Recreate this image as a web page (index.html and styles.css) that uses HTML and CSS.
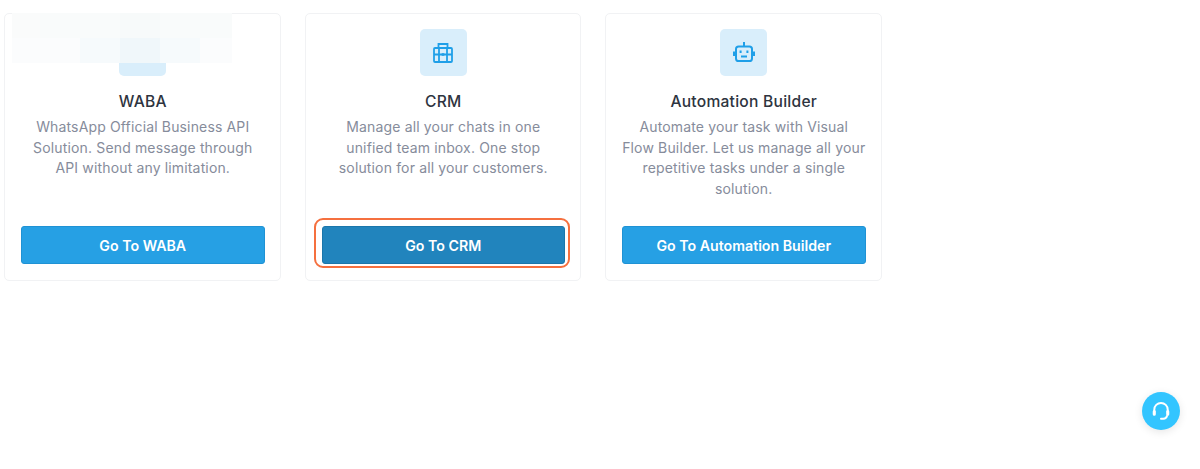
FILE: index.html
```html
<!DOCTYPE html>
<html lang="en">
<head>
<meta charset="utf-8">
<title>Products</title>
<link rel="stylesheet" href="styles.css">
</head>
<body>
<main class="cards">
  <section class="card">
    <div class="icon-box"></div>
    <h2 class="title">WABA</h2>
    <p class="desc">WhatsApp Official Business API<br>Solution. Send message through<br>API without any limitation.</p>
    <a class="btn">Go To WABA</a>
    <div class="mosaic">
      <i class="m1"></i><i class="m2"></i><i class="m2"></i><i class="m3"></i><i class="m2"></i><i class="m2"></i>
      <i class="m4"></i><i class="m4"></i><i class="m5"></i><i class="m6"></i><i class="m5"></i><i class="m4"></i>
    </div>
  </section>
  <section class="card">
    <div class="icon-box">
      <svg class="icon-case" width="20" height="20" viewBox="0 0 20 20" fill="none" stroke="#1f9fe8" stroke-width="1.8">
        <rect x="1" y="5" width="18" height="14" rx="1"/>
        <path d="M5.5 5V1h9v4M1 11.5h18M6 5v14M14 5v14"/>
        <path d="M10 10.2v2.6" stroke-width="2.6"/>
      </svg>
    </div>
    <h2 class="title">CRM</h2>
    <p class="desc">Manage all your chats in one<br>unified team inbox. One stop<br>solution for all your customers.</p>
    <div class="focus-ring"><a class="btn btn-active">Go To CRM</a></div>
  </section>
  <section class="card">
    <div class="icon-box">
      <svg class="icon-bot" width="22" height="22" viewBox="0 0 22 22" fill="none" stroke="#1f9fe8" stroke-width="2">
        <rect x="3" y="5.5" width="16" height="14.5" rx="2.6"/>
        <path d="M11 5.5V1M1 10.5v4.5M21 10.5v4.5M8 15.5h6"/>
        <path d="M6.6 10.8h2M13.4 10.8h2" stroke-width="2.4"/>
      </svg>
    </div>
    <h2 class="title">Automation Builder</h2>
    <p class="desc">Automate your task with Visual<br>Flow Builder. Let us manage all your<br>repetitive tasks under a single<br>solution.</p>
    <a class="btn">Go To Automation Builder</a>
  </section>
</main>
<button class="help" aria-label="Support">
  <svg width="20" height="20" viewBox="0 0 22 22" fill="none" stroke="#fff" stroke-width="2.2" stroke-linecap="round">
    <path d="M3.6 12V9.5a7.4 7.4 0 0 1 14.8 0V12"/>
    <path d="M3.6 11.5v3M18.4 11.5v3" stroke-width="3.4"/>
    <path d="M17.6 16.5c-.6 2-2 2.9-4 3h-2.6"/>
  </svg>
</button>
</body>
</html>
```
FILE: styles.css
```css
* { box-sizing: border-box; }
html, body { margin: 0; height: 100%; background: #fff; overflow: hidden; }
body { font-family: "Inter", "Open Sans", sans-serif; }
.cards { display: flex; gap: 24px; padding: 13px 0 0 4px; align-items: flex-start; }
.card {
  position: relative;
  width: 276.5px;
  height: 268px;
  padding: 15px 15px 16px 16px;
  display: flex;
  flex-direction: column;
  align-items: center;
  border: 1px solid #f1f2f4;
  border-radius: 5px;
  background: #fff;
}
.icon-box {
  width: 47px;
  height: 47px;
  flex: none;
  display: flex;
  align-items: center;
  justify-content: center;
  background: #d9eefb;
  border-radius: 5px;
}
.icon-bot { position: relative; top: -1px; }
.title {
  margin: 16px 0 0;
  font-size: 15.6px;
  line-height: 20px;
  font-weight: 500;
  letter-spacing: .25px;
  color: #2e3440;
}
.desc {
  margin: 5px -8px 0;
  align-self: stretch;
  font-size: 14px;
  line-height: 20.5px;
  letter-spacing: .15px;
  text-align: center;
  color: #868c9b;
  flex: 1;
}
.btn {
  display: flex;
  align-items: center;
  justify-content: center;
  align-self: stretch;
  height: 38px;
  flex: none;
  background: #26a0e4;
  border: 1px solid #1f92d4;
  border-radius: 3px;
  color: #fff;
  font-size: 14.2px;
  font-weight: 600;
}
.btn-active { background: #2184bd; border-color: #1a76ab; }
.focus-ring {
  flex: none;
  align-self: stretch;
  margin: -8px -5px -4px -8px;
  padding: 6px 3px 2px 6px;
  border: 2px solid #f5703f;
  border-radius: 9px;
}
.mosaic {
  position: absolute;
  left: 7px;
  top: -1px;
  width: 220px;
  height: 50px;
  display: grid;
  grid-template-columns: 28px 40px 40px 40px 40px 32px;
  grid-template-rows: 25px 25px;
}
.m1 { background: #fafbfb; }
.m2 { background: #f9fbfb; }
.m3 { background: #f7fafa; }
.m4 { background: #fbfcfd; }
.m5 { background: #f6fafc; }
.m6 { background: #f0f7fa; }
.help {
  position: fixed;
  left: 1142px;
  top: 392px;
  width: 38px;
  height: 38px;
  padding: 0;
  border: 0;
  border-radius: 50%;
  background: #33c5ff;
  box-shadow: 0 2px 8px rgba(0, 0, 0, .1);
  display: flex;
  align-items: center;
  justify-content: center;
}
```
